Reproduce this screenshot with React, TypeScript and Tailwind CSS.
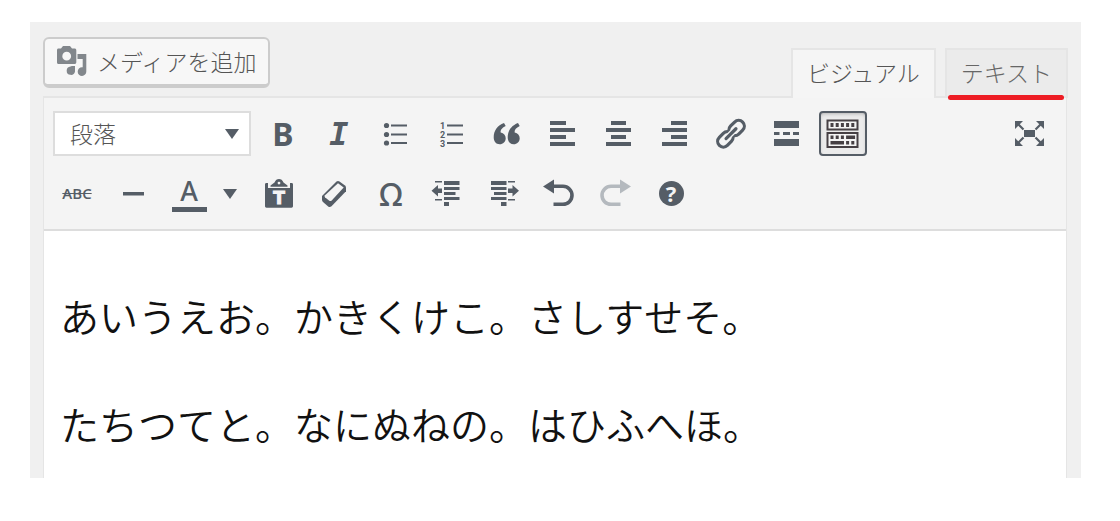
import React, { useState } from 'react';
import clsx from 'clsx';

type IconProps = { children: React.ReactNode };

function Icon({ children }: IconProps) {
  return (
    <svg className="h-[31px] w-[30px] shrink-0 overflow-visible" viewBox="0 0 30 31" fill="currentColor" aria-hidden="true">
      {children}
    </svg>
  );
}

type ToolProps = {
  label: string;
  children: React.ReactNode;
  pressed?: boolean;
  disabled?: boolean;
  onClick?: () => void;
};

function Tool({ label, children, pressed = false, disabled = false, onClick }: ToolProps) {
  return (
    <button
      type="button"
      aria-label={label}
      aria-pressed={pressed}
      disabled={disabled}
      onClick={onClick}
      className={clsx(
        'flex h-[45px] w-12 shrink-0 items-center justify-center rounded border-2',
        pressed
          ? 'border-[#555d66] bg-[#ebebeb] text-[#464044] shadow-[inset_0_2px_5px_-3px_rgba(0,0,0,0.5)]'
          : 'border-transparent',
        disabled && 'text-[#b4b9be]'
      )}
    >
      {children}
    </button>
  );
}

const listLines = <path d="M11 6.5h16v2H11zM11 15.5h16v2H11zM11 24h16v2H11z" />;

const undoArrow = (
  <>
    <path d="M-1 8.5 10 1.5v14z" />
    <path d="M9 8.3h10a9 9 0 0 1 0 18H9.5" fill="none" stroke="currentColor" strokeWidth="3.6" />
  </>
);

const quoteMark = 'M12 5l1.7 3C9.5 10 8.3 12.5 8.7 14.6c3 .6 5 2.7 5 5.7 0 3.5-2.7 6-6 6-3.7 0-6-2.8-6-7C1.7 12.5 5.5 7.5 12 5z';

export default function App() {
  const [tab, setTab] = useState('visual');
  const [expanded, setExpanded] = useState(true);

  return (
    <div className="pt-[22px] pr-[39px] pb-11 pl-[30px] font-['Noto_Sans_CJK_JP',sans-serif] font-light">
      <div className="bg-[#f0f0f0] pr-[14px] pl-[13px]">
        {/* Media button and editor tabs */}
        <div className="flex items-end justify-between">
          <div className="pt-[15px] pb-2">
            <button
              type="button"
              className="flex h-[51px] items-center gap-[10px] rounded-md border-2 border-b-4 border-[#ccc] bg-[#f7f7f7] px-3 pb-[2px] text-[23px] leading-8 text-[#555]"
            >
              <svg className="h-[30px] w-[30px]" viewBox="0 0 30 30" fill="#82878c" aria-hidden="true">
                <path
                  fillRule="evenodd"
                  d="M1.5 2.5H4L6 0h7l2 2.5h2.500c1 0 1.800.7 1.800 1.700v12c0 1-.8 1.800-1.800 1.800h-16C.6 18 0 17.200 0 16.200v-12c0-1 .6-1.700 1.500-1.700zM9.700 5.800a4.400 4.400 0 1 0 0 8.800 4.400 4.400 0 0 0 0-8.800z"
                />
                <path d="M20.5 8H29.300v17.500a4.300 4.300 0 1 1-4.300-4.200h.7V13h-5.200z" />
                <path d="M13.5 20.500c1-.6 2.700-.5 4.500-.5v5.500a4.200 4.200 0 1 1-4.500-5z" />
              </svg>
              メディアを追加
            </button>
          </div>

          <div role="tablist" className="relative -mb-[2px] flex gap-[9px] text-[23px] leading-[44px]">
            <button
              type="button"
              role="tab"
              aria-selected={tab === 'visual'}
              onClick={() => setTab('visual')}
              className="border-2 border-b-0 border-[#e5e5e5] bg-[#f5f5f5] px-[14px] pb-1 text-[#555]"
            >
              ビジュアル
            </button>
            <button
              type="button"
              role="tab"
              aria-selected={tab === 'text'}
              onClick={() => setTab('text')}
              className="relative -mr-px border-2 border-[#e5e5e5] bg-[#ebebeb] px-[14px] pb-[2px] text-[#666]"
            >
              テキスト
              <span className="absolute right-[2px] -bottom-1 left-[1px] h-[5px] rounded-full bg-[#ed1c24]" />
            </button>
          </div>
        </div>

        <div className="border-x border-t-2 border-[#e5e5e5]">
          {/* Toolbar */}
          <div
            role="toolbar"
            aria-label="エディターツール"
            className="flex flex-col gap-[15px] border-b-2 border-[#ddd] bg-[#f4f4f4] py-[13px] pr-3 pl-[9px] text-[#555d66]"
          >
            <div className="flex gap-2">
              <div className="relative shrink-0">
                <select
                  aria-label="書式"
                  className="h-[45px] w-[198px] appearance-none border-2 border-[#ddd] bg-white pb-[2px] pl-[15px] text-[23px] leading-8 text-[#555]"
                >
                  <option>段落</option>
                </select>
                <svg className="pointer-events-none absolute top-[18px] right-3 h-[10px] w-[14px]" viewBox="0 0 14 10" fill="currentColor" aria-hidden="true">
                  <path d="M0 0h14L7 10z" />
                </svg>
              </div>
              <Tool label="太字">
                <span className="font-['Noto_Sans'] text-[32px] leading-8 font-bold">B</span>
              </Tool>
              <Tool label="イタリック">
                <span className="font-['DejaVu_Sans_Mono'] text-[32px] leading-8 font-bold italic">I</span>
              </Tool>
              <Tool label="番号なしリスト">
                <Icon>
                  <circle cx="6.5" cy="7.5" r="2.6" />
                  <circle cx="6.5" cy="16.5" r="2.6" />
                  <circle cx="6.5" cy="25" r="2.6" />
                  {listLines}
                </Icon>
              </Tool>
              <Tool label="番号付きリスト">
                <Icon>
                  <g className="font-['Roboto'] text-[9px] font-bold">
                    <text x="4" y="11">1</text>
                    <text x="4" y="20">2</text>
                    <text x="4" y="29">3</text>
                  </g>
                  {listLines}
                </Icon>
              </Tool>
              <Tool label="引用">
                <Icon>
                  <path d={quoteMark} />
                  <path d={quoteMark} transform="translate(14)" />
                </Icon>
              </Tool>
              <Tool label="左寄せ">
                <Icon>
                  <path d="M2 3h16v4H2zM2 10h25v4H2zM2 17h16v4H2zM2 24h25v4H2z" />
                </Icon>
              </Tool>
              <Tool label="中央揃え">
                <Icon>
                  <path d="M7 3h15v4H7zM2 10h25v4H2zM7 17h15v4H7zM2 24h25v4H2z" />
                </Icon>
              </Tool>
              <Tool label="右寄せ">
                <Icon>
                  <path d="M11 3h16v4H11zM2 10h25v4H2zM11 17h16v4H11zM2 24h25v4H2z" />
                </Icon>
              </Tool>
              <Tool label="リンクの挿入/編集">
                <Icon>
                  <g transform="translate(15 15.7) rotate(-45)" fill="none" stroke="currentColor" strokeWidth="3.2">
                    <rect x="-16.5" y="-5.7" width="17" height="11.4" rx="5.7" />
                    <rect x="-.5" y="-5.7" width="17" height="11.4" rx="5.7" />
                    <path d="M-7 0H7" stroke="#f4f4f4" strokeWidth="6" />
                    <path d="M-7 0H7" strokeLinecap="round" />
                  </g>
                </Icon>
              </Tool>
              <Tool label="「続きを読む」タグを挿入">
                <Icon>
                  <path d="M2 3h25v7H2zM2 14h5.500v3H2zM11 14h7v3h-7zM21 14h6v3h-6zM2 21h25v7H2z" />
                </Icon>
              </Tool>
              <Tool label="ツールバー切り替え" pressed={expanded} onClick={() => setExpanded(!expanded)}>
                <Icon>
                  <path d="M-.5 2.500h30v9h-30zM-.5 15h30v14h-30z" fill="#f4f4f4" stroke="currentColor" strokeWidth="2" />
                  <path d="M2.500 5h3v4h-3zM7.700 5h3v4h-3zM12.900 5h3v4h-3zM18.100 5h3v4h-3zM23.300 5h3v4h-3z" />
                  <path d="M2.500 17.500h3V21h-3zM7.700 17.500h3V21h-3zM12.900 17.500h3V21h-3zM18.100 17.500h9V21h-9zM2.500 23h13.500v3.500H2.500zM18.100 23h3v3.500h-3zM23.300 23h3v3.500h-3z" />
                </Icon>
              </Tool>
              <div className="ml-auto">
                <Tool label="集中執筆モード">
                  <Icon>
                    <path d="M9 12h11v7H9z" />
                    <path d="M0 3h8L0 11zM29 3v8l-8-8zM0 28v-8l8 8zM29 28h-8l8-8z" />
                    <path d="M3 6l5.500 5.500M26 6l-5.500 5.500M3 25l5.500-5.500M26 25l-5.500-5.500" stroke="currentColor" strokeWidth="2.2" />
                  </Icon>
                </Tool>
              </div>
            </div>

            {expanded && (
              <div className="flex gap-2">
                <Tool label="打ち消し">
                  <span className="pb-[2px] font-['Open_Sans'] text-[15px] leading-5 font-semibold line-through">ABC</span>
                </Tool>
                <Tool label="横ライン">
                  <Icon>
                    <path d="M5 14h21v3.500H5z" />
                  </Icon>
                </Tool>
                <div className="flex">
                  <Tool label="テキスト色">
                    <span className="flex w-[35px] shrink-0 flex-col items-center border-b-[5px] border-current py-[2px] font-['Noto_Sans'] text-[27px] leading-[28px] font-medium">
                      A
                    </span>
                  </Tool>
                  <button type="button" aria-label="色を選択" className="flex h-[45px] w-[34px] items-center justify-center">
                    <svg className="h-[10px] w-[14px]" viewBox="0 0 14 10" fill="currentColor" aria-hidden="true">
                      <path d="M0 0h14L7 10z" />
                    </svg>
                  </button>
                </div>
                <Tool label="テキストとしてペースト">
                  <Icon>
                    <path d="M1 6.500C1 5.500 1.500 5 2.500 5H4v5h22V5h1.500c1 0 1.500.5 1.500 1.500V28c0 1-.6 1.700-1.500 1.700h-25C1.600 29.700 1 29 1 28z" />
                    <path fillRule="evenodd" d="M6.500 8.700V7.500l4-3C11.500 2 13 1 15 1s3.500 1 4.500 3.500l4 3v1.200zM15 3.700a1.400 1.400 0 1 0 0 2.800 1.400 1.400 0 0 0 0-2.800z" />
                    <text x="15" y="26" textAnchor="middle" fill="#f4f4f4" stroke="#f4f4f4" strokeWidth="1" className="font-['DejaVu_Sans'] text-[17px] font-bold">
                      T
                    </text>
                  </Icon>
                </Tool>
                <Tool label="書式設定をクリア">
                  <Icon>
                    <path d="M16.500 3.500q1.500-1 3 0l5.500 4q1 1 1 2.300v3.500L11.500 28.300q-1.700 1.400-3.300.2L3 24q-1-1-1-2.200V18z" />
                    <path d="M18 5.300 23.700 9.500 11.700 22.500Q10.500 23.500 9 22.500L5 19.200q-1-1 0-2z" fill="#f4f4f4" />
                  </Icon>
                </Tool>
                <Tool label="特殊文字">
                  <span className="font-['Noto_Sans'] text-[32px] leading-8 font-medium">Ω</span>
                </Tool>
                <Tool label="インデントを減らす">
                  <Icon>
                    <path d="M12 3h15.500v4H12zM12 9h15.500v3H12zM12 14h11.500v3H12zM12 19h15.500v3H12zM12 24h5v4h-5z" />
                    <path d="M3 3h7v1.500H3zM3 21h7v1.500H3zM-.5 12.700 6 7v3.500h4V15H6v3.500z" />
                  </Icon>
                </Tool>
                <Tool label="インデントを増やす">
                  <Icon>
                    <path d="M3 3h15.500v4H3zM3 9h15.500v3H3zM6 14h12.500v3H6zM3 19h15.500v3H3zM13 24h5.500v4H13z" />
                    <path d="M20 3h7v1.500h-7zM20 21h7v1.500h-7zM31 12.700 24.500 7v3.500H20V15h4.500v3.500z" />
                  </Icon>
                </Tool>
                <Tool label="取り消し">
                  <Icon>{undoArrow}</Icon>
                </Tool>
                <Tool label="やり直し" disabled>
                  <Icon>
                    <g transform="translate(30) scale(-1 1)">{undoArrow}</g>
                  </Icon>
                </Tool>
                <Tool label="キーボードショートカット">
                  <span className="flex h-[25px] w-[25px] items-center justify-center rounded-full bg-[#555d66] font-['Noto_Sans'] text-[22px] leading-[25px] font-bold text-[#f4f4f4]">
                    ?
                  </span>
                </Tool>
              </div>
            )}
          </div>

          {/* Editing area */}
          <div
            role="textbox"
            aria-multiline="true"
            aria-label="本文"
            contentEditable
            suppressContentEditableWarning
            className="flex flex-col gap-[54px] bg-white px-4 pt-[57px] pb-7 text-[39px] leading-[54px] font-[350] text-[#111] outline-none"
          >
            <p>あいうえお。かきくけこ。さしすせそ。</p>
            <p>たちつてと。なにぬねの。はひふへほ。</p>
          </div>
        </div>
      </div>
    </div>
  );
}
